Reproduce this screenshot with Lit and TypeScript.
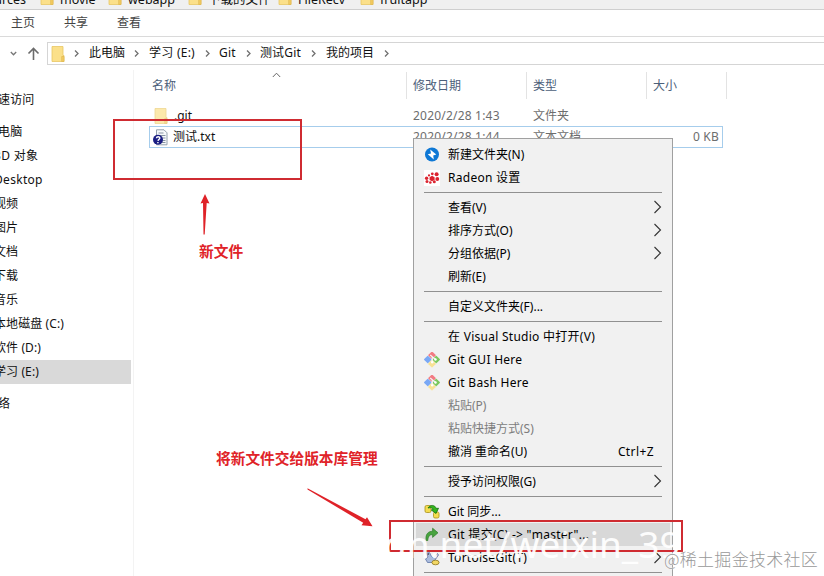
import { LitElement, html, css, svg, nothing } from "lit";
import { customElement } from "lit/decorators.js";
import { classMap } from "lit/directives/class-map.js";

type Item = { label?: string; icon?: string; sub?: boolean; off?: boolean; key?: string; hot?: boolean; cls?: string };

const MENU: Item[] = [
  { label: "新建文件夹(N)", icon: "bolt" },
  { label: "Radeon 设置", icon: "radeon", cls: "wide" },
  {},
  { label: "查看(V)", sub: true },
  { label: "排序方式(O)", sub: true },
  { label: "分组依据(P)", sub: true },
  { label: "刷新(E)" },
  {},
  { label: "自定义文件夹(F)..." },
  {},
  { label: "在 Visual Studio 中打开(V)", cls: "wide" },
  { label: "Git GUI Here", icon: "git", cls: "wide" },
  { label: "Git Bash Here", icon: "git", cls: "wide" },
  { label: "粘贴(P)", off: true },
  { label: "粘贴快捷方式(S)", off: true },
  { label: "撤消 重命名(U)", key: "Ctrl+Z" },
  {},
  { label: "授予访问权限(G)", sub: true },
  {},
  { label: "Git 同步...", icon: "sync" },
  { label: 'Git 提交(C) -> "master"...', icon: "commit", hot: true, cls: "wide" },
  { label: "TortoiseGit(T)", icon: "tortoise", sub: true, cls: "wide" },
  {},
];

const ICONS: Record<string, unknown> = {
  bolt: svg`<circle cx="8" cy="7.500" r="7" fill="#0e78d5"/><path d="M6.200 2.500 12.300 7.600 9.200 8.600 9.800 12.600 3.800 7.300 7 6.400Z" fill="#fff"/>`,
  radeon: svg`<rect width="16" height="16" fill="#fff"/><g fill="#dc2430"><path d="M5.600 7.200 8 5.800 10.600 7.200V10L8 11.200 5.600 10Z"/><circle cx="2.600" cy="8.200" r="1.700"/><circle cx="3" cy="11.600" r="1.500"/><circle cx="6.300" cy="12.500" r="1.300"/><circle cx="10.300" cy="11.800" r="1.500"/><circle cx="13.300" cy="9" r="1.900"/><circle cx="12.600" cy="4.200" r="2"/><circle cx="8.300" cy="3.800" r="1.400"/><circle cx="5" cy="5.400" r="1.100"/></g>`,
  git: svg`<g transform="translate(0 -.5) rotate(45 8 8)"><rect x="2.200" y="2.200" width="5.600" height="5.600" rx=".6" fill="#f27b82"/><rect x="2.200" y="8.200" width="5.600" height="5.600" rx=".6" fill="#79a8f5"/><rect x="8.200" y="8.200" width="5.600" height="5.600" rx=".6" fill="#f8e294"/><rect x="8.200" y="2.200" width="5.600" height="5.600" rx=".6" fill="#7bc85c"/></g><path d="M6.200 3 11.500 7.500M8.200 5V10.500" stroke="#f4f4f4" stroke-width="1.200" fill="none"/><circle cx="8.200" cy="10.200" r="1.200" fill="#fff"/><circle cx="11.500" cy="7.500" r="1.200" fill="#fff"/>`,
  sync: svg`<rect x="1" y="1.500" width="6" height="7" rx="1.500" fill="#f4dd50" stroke="#a89019" stroke-width=".8"/><rect x="9.500" y="8" width="5.500" height="6" rx="1.500" fill="#f4dd50" stroke="#a89019" stroke-width=".8"/><path d="M4 4C6 .4 11 .6 12.300 4.500L14.500 4.200 12 9.500 7.300 6 9.200 5.400C8.500 3.600 6.500 3.400 4 4Z" fill="#35b51d" stroke="#146e0e" stroke-width=".8"/>`,
  commit: svg`<path d="M2.200 13.500C1 7 4.500 4.200 8.600 4.300V1.200L14 5.800 8.600 10.400V7.700C5.500 7.500 4 9.500 3.800 13.500Z" fill="#48a33f" stroke="#2e7c2a" stroke-width=".7"/>`,
  tortoise: svg`<path d="M2 2.500C4 1 6 2 6.500 5L9 8 13.500 3.500 14.500 5 11 10 9.500 12.500H3.500L1.500 9 4 7Z" fill="#aabbdc" stroke="#5d73a5" stroke-width=".8"/><ellipse cx="11.500" cy="12.500" rx="3.600" ry="2.300" fill="#f2d764" stroke="#8d741e" stroke-width=".8"/><circle cx="4.200" cy="4" r=".8" fill="#223"/>`,
};

const folder = html`<svg class="folder" width="14" height="16" viewBox="0 0 14 16">
  <path d="M1 .5h11v9h1v6H1Z" fill="#fbe08a" stroke="#e9c763" stroke-width=".8"/>
  <path d="M10.700 10.500h2.300v5h-2.300Z" fill="#f4cd62" stroke="#dcb44e" stroke-width=".6"/>
</svg>`;

@customElement("context-menu")
class ContextMenu extends LitElement {
  static styles = css`
    :host { display: block; box-sizing: border-box; width: 260px; height: 445px; padding-top: 4px;
      background: #f1f1f1; border: 1px solid #a0a0a0; }
    .sep { height: 7px; padding: 3px 10px 3px; box-sizing: border-box; }
    .sep::before { content: ""; display: block; height: 1px; background: #919191; }
    .item { display: flex; align-items: center; height: 23px; line-height: 23px; margin: 0 2px;
      padding: 0 8px; color: #000; white-space: pre; }
    .hot { background: #d8d8d8; }
    .off { color: #7d7d7d; }
    .icon { width: 16px; height: 16px; flex: none; margin-right: 8px; }
    .label { flex: 1; }
    .wide { letter-spacing: .27px; }
    .key { margin-right: 8px; letter-spacing: .4px; }
    .chev { margin-top: -2px; }
  `;
  render() {
    return MENU.map((m) =>
      m.label
        ? html`<div class=${classMap({ item: true, hot: !!m.hot, off: !!m.off })}>
            <svg class="icon" viewBox="0 0 16 16">${m.icon ? ICONS[m.icon] : nothing}</svg>
            <span class="label ${m.cls ?? ""}">${m.label}</span>
            ${m.key ? html`<span class="key">${m.key}</span>` : nothing}
            ${m.sub
              ? html`<svg class="chev" width="9" height="14" viewBox="0 0 9 14"><path d="M1.500 1 7.500 7 1.500 13" fill="none" stroke="#333" stroke-width="1.100"/></svg>`
              : nothing}
          </div>`
        : html`<div class="sep"></div>`
    );
  }
}

@customElement("app-root")
class AppRoot extends LitElement {
  static styles = css`
    :host { display: flex; flex-direction: column; position: relative; width: 824px; height: 576px;
      overflow: hidden; background: #fff; color: #111;
      font: 12px/16px "Noto Sans", "Noto Sans CJK SC", sans-serif; white-space: nowrap; }
    svg { flex: none; }
    .marks { display: grid; grid-template-columns: 40px 68px 80px 90px 82px 1fr; align-content: end; height: 9px;
      box-sizing: border-box; background: #f0f0f0; overflow: hidden; flex: none; }
    .mark { display: flex; align-items: flex-end; gap: 6px; height: 16px; margin-bottom: 4px; }
    .mark span { font-size: 12.500px; line-height: 16px; margin-bottom: -3px; }
    .mark.first { justify-content: flex-end; margin-right: 14px; }
    .tabs { display: flex; gap: 29px; align-items: center; height: 28px; padding: 0 11px; box-sizing: border-box;
      border-top: 1px solid #cfcfcf; border-bottom: 1px solid #dadada; color: #444; flex: none; }
    .nav { display: flex; align-items: center; height: 33px; flex: none; padding-left: 10px; }
    .up { margin-left: 10px; }
    .addr { display: flex; flex: 1; align-items: center; height: 23px; margin: 0 -2px 0 7px; padding-left: 3px;
      box-sizing: border-box; border: 1px solid #d5d5d5; line-height: 20px; }
    .addr span { margin-top: -2px; }
    .arrow { width: 5px; height: 7px; }
    .c0 { margin-left: 9px; } .c1 { margin: 0 9px 0 10px; } .c2 { margin: 0 10px 0 10px; letter-spacing: .25px; }
    .c3 { margin: 0 10px 0 9px; letter-spacing: .25px; } .c4 { margin: 0 10px 0 9px; letter-spacing: .2px; }
    .c5 { margin-left: 10px; }
    .main { display: flex; flex: 1; min-height: 0; }
    .side { width: 134px; box-sizing: border-box; border-right: 1px solid #f3f3f3; padding-top: 18px; }
    .row { height: 24px; line-height: 23px; width: 131px; overflow: hidden; letter-spacing: .1px; }
    .row.en { letter-spacing: .3px; }
    .row span { display: block; margin-left: -6px; }
    .row.top span { margin-left: -14px; }
    .row.top { margin-bottom: 8px; }
    .row.tight { margin-bottom: 0; }
    .row.gap { margin-bottom: 8px; }
    .sel { background: #d9d9d9; }
    .list { flex: 1; padding-left: 15px; }
    .head { display: grid; grid-template-columns: 258px 120px 120px 80px; height: 27px; margin: 2px 0 6px; line-height: 27px;
      color: #4c607a; position: relative; }
    .head div { border-right: 1px solid #e3e3e3; padding-left: 6px; }
    .head div:first-child { padding-left: 3px; }
    .sort { position: absolute; left: 123px; top: 0; }
    .file { display: grid; grid-template-columns: 258px 120px 120px 1fr; align-items: center; height: 21px; width: 574px;
      box-sizing: border-box; color: #6d6d6d; }
    .file.on { border: 1px solid #a6cdec; grid-template-columns: 257px 120px 120px 1fr; height: 22px; }
    .name { display: flex; align-items: center; color: #111; padding-left: 5px; gap: 6px; }
    .on .name { padding-left: 2px; gap: 4px; }
    .file .d { padding-left: 6px; letter-spacing: .2px; }
    .file .t { padding-left: 6px; }
    .file .s { text-align: right; padding-right: 3px; letter-spacing: .2px; }
    .pale { opacity: .7; display: flex; }
    .menu { position: absolute; left: 413px; top: 138px; }
    .box { position: absolute; border: 2px solid #cf2b31; box-sizing: border-box; }
    .b1 { left: 113px; top: 119px; width: 189px; height: 61px; }
    .b2 { left: 389px; top: 520px; width: 294px; height: 32px; }
    .note { position: absolute; color: #e02328; font: bold 14.700px/20px "Noto Sans CJK SC", sans-serif; }
    .n1 { left: 199px; top: 241px; } .n2 { left: 216px; top: 448px; }
    .arrows { position: absolute; left: 0; top: 0; }
    .wm { position: absolute; left: 384px; top: 519px; font-size: 37px; line-height: 50px; color: #fff; opacity: .93; }
    .jj { position: absolute; left: 664px; top: 547px; font: 300 17px/24px "Noto Sans CJK SC", sans-serif; color: #999;
      letter-spacing: .3px; text-shadow: 0 0 1px #fff, 0 0 1px #fff; }
  `;

  private crumb(cls: string) {
    return html`<svg class="arrow ${cls}" viewBox="0 0 5 7"><path d="M1 .5 4 3.500 1 6.500" fill="none" stroke="#707070" stroke-width="1.300"/></svg>`;
  }

  render() {
    const side: [string, string][] = [
      ["快速访问", "top"], ["此电脑", "top tight"], ["3D 对象", "en"], ["Desktop", "en"], ["视频", ""], ["图片", ""],
      ["文档", ""], ["下载", ""], ["音乐", ""], ["本地磁盘 (C:)", ""], ["软件 (D:)", ""], ["学习 (E:)", "sel gap"], ["网络", "top"],
    ];
    return html`
      <div class="marks">
        <div class="mark first"><span>sources</span></div>
        ${["movie", "webapp", "下载的文件", "FileRecv", "fruitapp"].map((t) => html`<div class="mark">${folder}<span>${t}</span></div>`)}
      </div>
      <div class="tabs"><span>主页</span><span>共享</span><span>查看</span></div>
      <div class="nav">
        <svg width="7" height="5" viewBox="0 0 7 5"><path d="M.8 1 3.500 3.800 6.200 1" fill="none" stroke="#777" stroke-width="1.300"/></svg>
        <svg class="up" width="13" height="13" viewBox="0 0 13 13"><path d="M6.500 13V1.500M1.500 6.500 6.500 1.500 11.500 6.500" fill="none" stroke="#6b6b6b" stroke-width="1.600"/></svg>
        <div class="addr">
          ${folder}${this.crumb("c0")}<span class="c1">此电脑</span>${this.crumb("")}<span class="c2">学习 (E:)</span>${this.crumb("")}<span
            class="c3">Git</span>${this.crumb("")}<span class="c4">测试Git</span>${this.crumb("")}<span class="c5">我的项目</span>${this.crumb("c5")}
        </div>
      </div>
      <div class="main">
        <div class="side">${side.map(([t, c]) => html`<div class="row ${c}"><span>${t}</span></div>`)}</div>
        <div class="list">
          <div class="head">
            <div>名称</div><div>修改日期</div><div>类型</div><div>大小</div>
            <svg class="sort" width="9" height="6" viewBox="0 0 9 6"><path d="M.8 5 4.500 1.200 8.200 5" fill="none" stroke="#666" stroke-width="1"/></svg>
          </div>
          <div class="file">
            <div class="name"><span class="pale">${folder}</span>.git</div>
            <div class="d">2020/2/28 1:43</div><div class="t">文件夹</div><div></div>
          </div>
          <div class="file on">
            <div class="name">
              <svg width="17" height="17" viewBox="0 0 17 17">
                <path d="M4.500 .8H12L15 3.800V15.800H4.500Z" fill="#f7f9fb" stroke="#93a0ad"/>
                <path d="M6.500 4h5M6.500 6.500h7M9 9h4.500M10.500 11.500h3M9.500 13.500h4" stroke="#8694a3"/>
                <circle cx="6" cy="10.800" r="5" fill="#1b1e83"/>
                <path d="M4.400 9.300C4.600 7.300 7.900 7.300 7.800 9.200 7.700 10.400 6.200 10.400 6 11.800M5.900 13v1.300" fill="none" stroke="#fff" stroke-width="1.400"/>
              </svg>测试.txt
            </div>
            <div class="d">2020/2/28 1:44</div><div class="t">文本文档</div><div class="s">0 KB</div>
          </div>
        </div>
      </div>
      <context-menu class="menu"></context-menu>
      <div class="box b1"></div>
      <div class="box b2"></div>
      <svg class="arrows" width="824" height="576" viewBox="0 0 824 576" fill="#df2228">
        <path d="M205 194 209.500 203.500 206.700 203 204.700 234.500H203.500L203 203 200.500 203.500Z"/>
        <path d="M307.500 488.300 365.500 519.300 367 517.300 372.500 526.300 361.500 525.300 363.200 522.800 307.500 489.500Z"/>
      </svg>
      <div class="note n1">新文件</div>
      <div class="note n2">将新文件交给版本库管理</div>
      <div class="wm">dn.net/weixin_39</div>
      <div class="jj">@稀土掘金技术社区</div>
    `;
  }
}
